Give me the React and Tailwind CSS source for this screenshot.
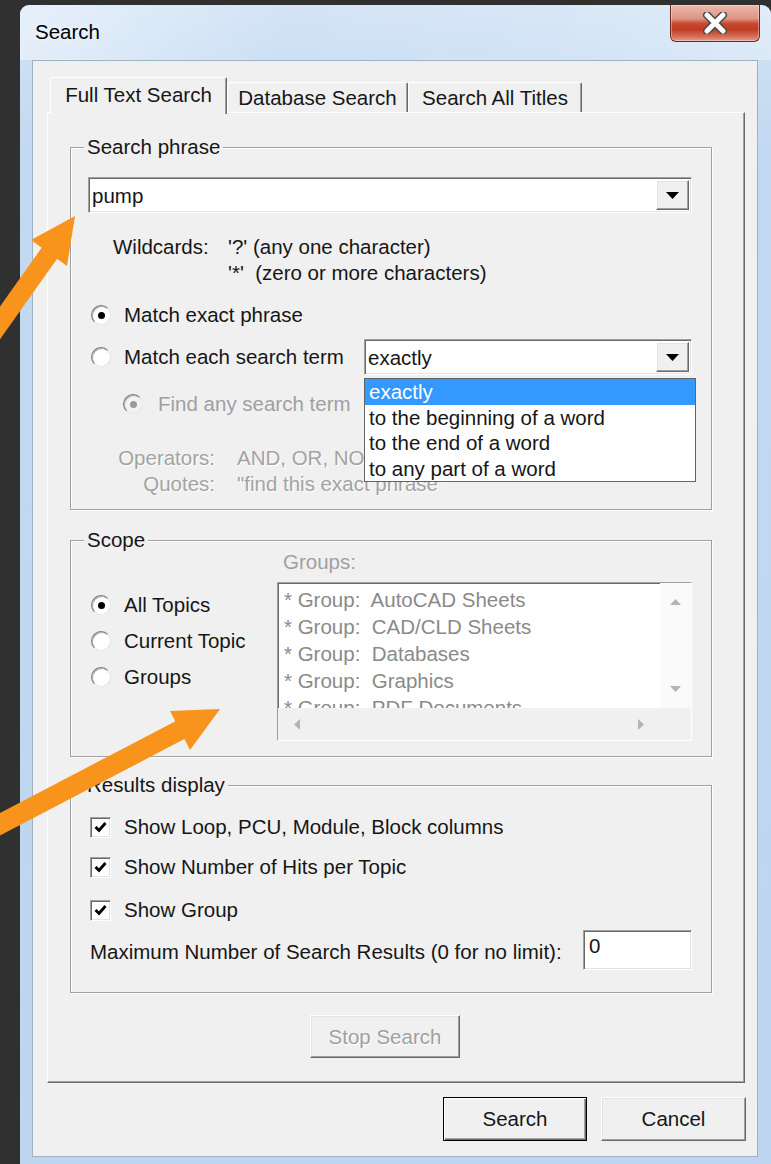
import React from "react";

// Classic 3D edge styles used by the dialog controls
const raised =
  "border border-t-white border-l-white border-r-[#696969] border-b-[#696969] shadow-[inset_-1px_-1px_0_#a0a0a0,inset_1px_1px_0_#e3e3e3]";
const sunken =
  "border border-t-[#a0a0a0] border-l-[#a0a0a0] border-r-white border-b-white shadow-[inset_1px_1px_0_#696969,inset_-1px_-1px_0_#e3e3e3]";

function Radio({ checked, disabled }) {
  return (
    <span
      className={`inline-flex h-[20px] w-[20px] shrink-0 items-center justify-center rounded-full border border-t-[#7a7a7a] border-l-[#7a7a7a] border-r-[#e6e6e6] border-b-[#e6e6e6] shadow-[inset_1px_1px_0_#b0b0b0] ${
        disabled ? "bg-[#f2f2f2]" : "bg-white"
      }`}
    >
      {checked && (
        <span className={`h-[7px] w-[7px] rounded-full ${disabled ? "bg-[#9a9a9a]" : "bg-black"}`} />
      )}
    </span>
  );
}

function Check() {
  return (
    <span className={`inline-flex h-[21px] w-[21px] shrink-0 items-center justify-center bg-white ${sunken}`}>
      <svg width="13" height="12" viewBox="0 0 13 12">
        <path d="M1.5 6 L5 9.5 L11.5 2" stroke="#000" strokeWidth="2.8" fill="none" />
      </svg>
    </span>
  );
}

function DownTriangle() {
  return (
    <svg width="13" height="7" viewBox="0 0 13 7">
      <polygon points="0,0 13,0 6.5,7" fill="#000" />
    </svg>
  );
}

function Combo({ value, className }) {
  return (
    <div className={`flex bg-white ${sunken} ${className}`}>
      <div className="flex flex-1 items-center pl-[3px] pt-[1px]">{value}</div>
      <div className={`m-[2px] flex w-[33px] items-center justify-center bg-[#f0f0f0] ${raised}`}>
        <DownTriangle />
      </div>
    </div>
  );
}

function GroupBox({ label, className, children }) {
  return (
    <div
      className={`relative border border-[#a0a0a0] shadow-[inset_1px_1px_0_#fff,1px_1px_0_#fff] ${className}`}
    >
      <span className="absolute -top-[14px] left-[13px] bg-[#f0f0f0] px-[3px]">{label}</span>
      {children}
    </div>
  );
}

function Tab({ label, active, width }) {
  return active ? (
    <div
      className={`relative z-10 -mb-[2px] flex h-[37px] ${width} items-center justify-center rounded-t-[2px] border-l border-t border-r border-l-white border-t-white border-r-[#696969] bg-[#f0f0f0] pb-[3px] shadow-[inset_-1px_0_0_#a0a0a0]`}
    >
      {label}
    </div>
  ) : (
    <div
      className={`flex h-[30px] ${width} items-center justify-center rounded-t-[2px] border-l border-t border-r border-l-white border-t-white border-r-[#696969] bg-[#f0f0f0] pt-[1px] shadow-[inset_-1px_0_0_#a0a0a0]`}
    >
      {label}
    </div>
  );
}

function ListBox() {
  const items = ["AutoCAD Sheets", "CAD/CLD Sheets", "Databases", "Graphics", "PDF Documents"];
  return (
    <div className={`grid h-[159px] w-[415px] grid-cols-[1fr_31px] grid-rows-[1fr_32px] bg-white ${sunken}`}>
      <div className="overflow-hidden pl-[6px] pt-[3px] text-[#8a8a8a]">
        {items.map((it) => (
          <div key={it} className="h-[27px] whitespace-pre leading-[27px]">
            {"* Group:  " + it}
          </div>
        ))}
      </div>
      <div className="flex flex-col items-center justify-between bg-[#fafafa] py-[16px]">
        <svg width="11" height="6" viewBox="0 0 11 6">
          <polygon points="5.5,0 11,6 0,6" fill="#b4b4b4" />
        </svg>
        <svg width="11" height="6" viewBox="0 0 11 6">
          <polygon points="0,0 11,0 5.5,6" fill="#b4b4b4" />
        </svg>
      </div>
      <div className="flex items-center justify-between bg-[#f0f0f0] px-[16px]">
        <svg width="6" height="11" viewBox="0 0 6 11">
          <polygon points="6,0 6,11 0,5.5" fill="#b4b4b4" />
        </svg>
        <svg width="6" height="11" viewBox="0 0 6 11">
          <polygon points="0,0 6,5.5 0,11" fill="#b4b4b4" />
        </svg>
      </div>
      <div className="bg-[#f0f0f0]" />
    </div>
  );
}

function CloseButton() {
  return (
    <div className="mr-[11px] flex h-[37px] w-[90px] items-center justify-center rounded-b-[6px] border border-t-0 border-[#6b2a20] bg-[linear-gradient(to_bottom,#ecb8aa_0%,#dd9584_38%,#c8472f_52%,#c23b25_68%,#d4705a_88%,#e3a08e_100%)] shadow-[inset_0_0_0_1px_rgba(255,255,255,0.35)]">
      <svg width="26" height="22" viewBox="0 0 26 22">
        <path d="M5 3 L21 19 M21 3 L5 19" stroke="#4a4a4a" strokeWidth="8" strokeLinecap="round" />
        <path d="M5 3 L21 19 M21 3 L5 19" stroke="#ffffff" strokeWidth="5" strokeLinecap="round" />
      </svg>
    </div>
  );
}

function Arrows() {
  return (
    <svg className="pointer-events-none absolute left-0 top-0" width="771" height="1164" viewBox="0 0 771 1164">
      <g fill="#f8941c" stroke="#f8941c">
        <line x1="-30" y1="365" x2="51" y2="251" strokeWidth="19" />
        <polygon points="75,216 67,266 31,240" stroke="none" />
        <line x1="-30" y1="840" x2="182" y2="729" strokeWidth="20" />
        <polygon points="220,709 190,750 170,711" stroke="none" />
      </g>
    </svg>
  );
}

export default function App() {
  return (
    <div className="relative h-[1164px] w-[771px] overflow-hidden bg-[#303030] pl-[20px] pt-[5px] font-['Liberation_Sans',Arial,sans-serif] text-[20.5px] leading-[26px] text-[#161616]">
      {/* window frame */}
      <div className="flex h-[1175px] w-[751px] flex-col rounded-t-[9px] bg-[linear-gradient(to_bottom,#d3e4f6,#c3d9f1_140px,#bdd5ef)]">
        {/* title bar */}
        <div className="flex h-[55px] justify-between rounded-t-[9px] bg-[linear-gradient(to_right,rgba(255,255,255,0.45),rgba(255,255,255,0)_35%,rgba(255,255,255,0.1)_70%,rgba(255,255,255,0.3))]">
          <span className="pl-[15px] pt-[14px] text-black [text-shadow:0_0_6px_rgba(255,255,255,0.9)]">Search</span>
          <CloseButton />
        </div>

        {/* client area */}
        <div className="ml-[12px] flex h-[1097px] w-[726px] flex-col border border-[#9fb0c3] bg-[#f0f0f0]">
          <div className="ml-[14px] mt-[16px] w-[698px]">
            {/* tab strip */}
            <div className="flex h-[35px] items-end pl-[3px]">
              <Tab label="Full Text Search" active width="w-[177px]" />
              <Tab label="Database Search" width="w-[181px]" />
              <Tab label="Search All Titles" width="w-[174px]" />
            </div>

            {/* tab page */}
            <div className="h-[971px] border border-t-white border-l-white border-r-[#696969] border-b-[#696969] shadow-[inset_-1px_-1px_0_#a0a0a0]">
              {/* Search phrase */}
              <GroupBox label="Search phrase" className="ml-[22px] mt-[34px] h-[363px] w-[642px]">
                <Combo value="pump" className="ml-[17px] mt-[29px] h-[36px] w-[604px]" />

                <div className="ml-[42px] mt-[21px] grid grid-cols-[115px_auto]">
                  <span>Wildcards:</span>
                  <span>'?' (any one character)</span>
                  <span />
                  <span className="whitespace-pre">'*'  (zero or more characters)</span>
                </div>

                <div className="ml-[20px] mt-[16px] flex h-[26px] items-center gap-[13px]">
                  <Radio checked />
                  <span>Match exact phrase</span>
                </div>

                <div className="ml-[20px] mt-[11px] flex h-[36px] items-center">
                  <Radio />
                  <span className="ml-[13px] w-[240px]">Match each search term</span>
                  <div className="relative">
                    <Combo value="exactly" className="h-[36px] w-[328px]" />
                    <div className="absolute left-0 top-[calc(100%+3px)] z-20 w-[332px] border border-[#646464] bg-white">
                      <div className="h-[25.5px] bg-[#3399ff] pl-[4px] leading-[25px] text-white">exactly</div>
                      <div className="h-[25.5px] pl-[4px] leading-[25px]">to the beginning of a word</div>
                      <div className="h-[25.5px] pl-[4px] leading-[25px]">to the end of a word</div>
                      <div className="h-[25.5px] pl-[4px] leading-[25px]">to any part of a word</div>
                    </div>
                  </div>
                </div>

                <div className="ml-[52px] mt-[16px] flex h-[26px] items-center gap-[15px] text-[#a0a0a0]">
                  <Radio checked disabled />
                  <span>Find any search term</span>
                </div>

                <div className="ml-[46px] mt-[28px] grid grid-cols-[98px_auto] gap-x-[22px] text-[#a3a3a3] [text-shadow:1px_1px_0_#fff]">
                  <span className="text-right">Operators:</span>
                  <span>AND, OR, NOT</span>
                  <span className="text-right">Quotes:</span>
                  <span>"find this exact phrase"</span>
                </div>
              </GroupBox>

              {/* Scope */}
              <GroupBox label="Scope" className="ml-[22px] mt-[30px] flex h-[217px] w-[642px]">
                <div className="flex w-[206px] flex-col gap-[10px] pl-[20px] pt-[51px]">
                  <div className="flex h-[26px] items-center gap-[13px]">
                    <Radio checked />
                    <span>All Topics</span>
                  </div>
                  <div className="flex h-[26px] items-center gap-[13px]">
                    <Radio />
                    <span>Current Topic</span>
                  </div>
                  <div className="flex h-[26px] items-center gap-[13px]">
                    <Radio />
                    <span>Groups</span>
                  </div>
                </div>
                <div className="pt-[8px]">
                  <div className="pl-[6px] text-[#a0a0a0]">Groups:</div>
                  <div className="mt-[7px]">
                    <ListBox />
                  </div>
                </div>
              </GroupBox>

              {/* Results display */}
              <GroupBox label="Results display" className="ml-[22px] mt-[28px] h-[208px] w-[642px]">
                <div className="ml-[19px] mt-[28px] flex h-[26px] items-center gap-[13px]">
                  <Check />
                  <span>Show Loop, PCU, Module, Block columns</span>
                </div>
                <div className="ml-[19px] mt-[14px] flex h-[26px] items-center gap-[13px]">
                  <Check />
                  <span>Show Number of Hits per Topic</span>
                </div>
                <div className="ml-[19px] mt-[17px] flex h-[26px] items-center gap-[13px]">
                  <Check />
                  <span>Show Group</span>
                </div>
                <div className="ml-[19px] mt-[7px] flex h-[40px] items-center">
                  <span className="w-[493px] pt-[4px]">Maximum Number of Search Results (0 for no limit):</span>
                  <div className={`h-[40px] w-[109px] bg-white pl-[5px] pt-[2px] ${sunken}`}>0</div>
                </div>
              </GroupBox>

              <div
                className={`ml-[262px] mt-[22px] flex h-[43px] w-[150px] items-center justify-center bg-[#f0f0f0] text-[#a0a0a0] [text-shadow:1px_1px_0_#fff] ${raised}`}
              >
                Stop Search
              </div>
            </div>
          </div>

          {/* dialog buttons */}
          <div className="mr-[11px] mt-[14px] flex justify-end gap-[14px]">
            <div className="flex h-[44px] w-[144px] items-center justify-center border border-black bg-[#f0f0f0] shadow-[inset_1px_1px_0_#fff,inset_-1px_-1px_0_#696969,inset_-2px_-2px_0_#a0a0a0]">
              Search
            </div>
            <div className={`flex h-[44px] w-[145px] items-center justify-center bg-[#f0f0f0] ${raised}`}>Cancel</div>
          </div>
        </div>
      </div>

      <Arrows />
    </div>
  );
}
